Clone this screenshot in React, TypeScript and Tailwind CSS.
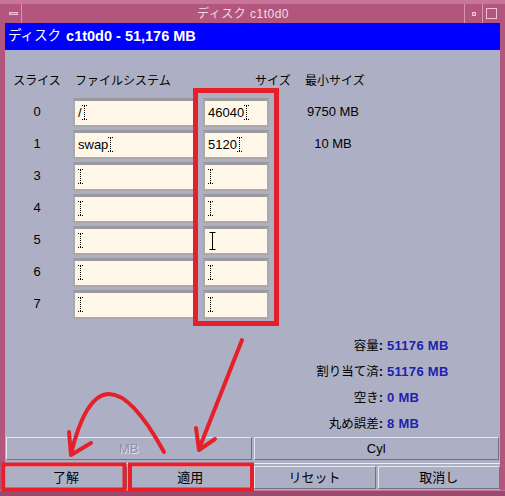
import React from 'react';

type Row = { n: string; fs?: string; size?: string; min?: string; mouse?: boolean };

const rows: Row[] = [
  { n: '0', fs: '/', size: '46040', min: '9750 MB' },
  { n: '1', fs: 'swap', size: '5120', min: '10 MB' },
  { n: '3' },
  { n: '4' },
  { n: '5', mouse: true },
  { n: '6' },
  { n: '7' },
];

const summary = [
  { label: '容量', value: '51176 MB' },
  { label: '割り当て済', value: '51176 MB' },
  { label: '空き', value: '0 MB' },
  { label: '丸め誤差', value: '8 MB' },
];

const font = "font-['Liberation_Sans','Noto_Sans_CJK_JP',sans-serif]";

// dotted text caret shown in each field
const Caret = () => (
  <span className="inline-flex flex-col items-center w-[5px] h-[15px]">
    <span className="w-[5px] h-px border-t border-dotted border-black" />
    <span className="flex-1 w-0 border-l border-dotted border-black" />
    <span className="w-[5px] h-px border-t border-dotted border-black" />
  </span>
);

const Field = ({ value, width, mouse }: { value?: string; width: string; mouse?: boolean }) => (
  <div
    className={`${width} h-[29px] bg-[#fff8ea] border-2 border-[#a9a9ab] border-t-[3px] border-t-[#9b9b9d] flex items-center pl-[3px] text-[13px] text-black`}
  >
    {value && <span>{value}</span>}
    {mouse ? (
      <svg width="7" height="18" viewBox="0 0 7 18" className="ml-[1px]">
        <path d="M0.5 0.5h6M3.5 0.5v17M0.5 17.5h6" stroke="#000" strokeWidth="1" fill="none" />
      </svg>
    ) : (
      <Caret />
    )}
  </div>
);

const Button = ({ label, dim }: { label: string; dim?: boolean }) => (
  <div
    className={`flex-1 h-[23px] flex items-center justify-center bg-[#adb0c4] border border-t-[#e4e6ee] border-l-[#e4e6ee] border-b-[#6f7282] border-r-[#6f7282] text-[13px] ${
      dim ? 'text-[#8e90a2] [text-shadow:1px_1px_0_#e4e6ee]' : 'text-black'
    }`}
  >
    {label}
  </div>
);

export default function App() {
  return (
    <div className={`relative w-[505px] h-[496px] bg-[#b3567e] flex flex-col overflow-hidden ${font}`}>
      {/* title bar */}
      <div className="h-[23px] flex border-t-[4px] border-t-[#c77598] pl-[5px] pr-[5px]">
        <div className="w-[17px] h-[19px] flex items-center justify-center border-r border-[#d895b2]">
          <span className="w-[9px] h-[3px] bg-[#d07aa0] border border-[#f0c0d4]" />
        </div>
        <div className="flex-1 flex items-center justify-center text-[12px] text-[#f2dbe6] tracking-[0.5px] border-r border-[#d895b2]">
          ディスク c1t0d0
        </div>
        <div className="w-[18px] h-[19px] flex items-center justify-center border-r border-[#d895b2]">
          <span className="w-[4px] h-[4px] bg-[#d07aa0] border border-[#f0c0d4]" />
        </div>
        <div className="w-[17px] h-[19px] flex items-center justify-center">
          <span className="w-[11px] h-[11px] border border-[#f0c0d4]" />
        </div>
      </div>

      {/* body */}
      <div className="mx-[5px] flex flex-col">
        <div className="h-[27px] bg-[#0000fe] flex items-center pl-[3px] text-white">
          <span className="text-[13.5px]">ディスク</span>
          <span className="font-bold ml-[5px] text-[14.5px]">c1t0d0 - 51,176 MB</span>
        </div>

        <div className="h-[440px] bg-[#adb0c4] flex flex-col text-black">
          {/* headers */}
          <div className="mt-[23px] h-[16px] flex items-center text-[12px] leading-[16px]">
            <span className="w-[64px] text-center">スライス</span>
            <span className="ml-[6px] w-[180px]">ファイルシステム</span>
            <span className="w-[50px]">サイズ</span>
            <span>最小サイズ</span>
          </div>

          {/* slices */}
          <div className="mt-[7px] flex flex-col">
            {rows.map((r) => (
              <div key={r.n} className="h-[32px] flex items-center text-[13px]">
                <span className="w-[64px] text-center">{r.n}</span>
                <div className="ml-[4px]">
                  <Field value={r.fs} width="w-[122px]" />
                </div>
                <div className="ml-[8px]">
                  <Field value={r.size} width="w-[66px]" mouse={r.mouse} />
                </div>
                <span className="w-[128px] text-center">{r.min}</span>
              </div>
            ))}
          </div>

          {/* totals */}
          <div className="mt-[13px] flex flex-col">
            {summary.map((s) => (
              <div key={s.label} className="h-[26px] flex items-center">
                <span className="w-[378px] text-right text-[12.5px]">
                  {s.label}
                  <span className="font-bold text-[13px]">:</span>
                </span>
                <span className="ml-[4px] font-bold text-[13px] tracking-[0.3px] text-[#1c22b0]">{s.value}</span>
              </div>
            ))}
          </div>

          {/* unit toggle */}
          <div className="flex gap-[2px] px-[1px]">
            <Button label="MB" dim />
            <Button label="Cyl" />
          </div>
          <div className="h-[6px] flex flex-col justify-center">
            <div className="h-px bg-[#eceef4]" />
          </div>
          <div className="flex gap-[2px]">
            <Button label="了解" />
            <Button label="適用" />
            <Button label="リセット" />
            <Button label="取消し" />
          </div>
        </div>
      </div>
      <div className="flex-1 bg-[#9a4a6c] border-t border-[#c77598]" />

      {/* hand-drawn red annotations */}
      <svg className="absolute inset-0 pointer-events-none" width="505" height="496" viewBox="0 0 505 496">
        <g stroke="#e5202a" strokeWidth="5" fill="none" strokeLinecap="round" strokeLinejoin="round">
          <rect x="195.5" y="90.5" width="81" height="233" strokeLinecap="butt" strokeLinejoin="miter" />
          <rect x="3.5" y="464.5" width="121" height="25" strokeWidth="4" strokeLinecap="butt" strokeLinejoin="miter" />
          <rect x="130" y="464.5" width="122" height="25" strokeWidth="4" strokeLinecap="butt" strokeLinejoin="miter" />
          <path d="M242 340 L199 449" strokeWidth="4" />
          <path d="M196 428 L199 450 L215 439" strokeWidth="4" />
          <path d="M164 452 Q 100 335 71 454" strokeWidth="4" />
          <path d="M69 432 L71 455 L91 443" strokeWidth="4" />
        </g>
      </svg>
    </div>
  );
}
